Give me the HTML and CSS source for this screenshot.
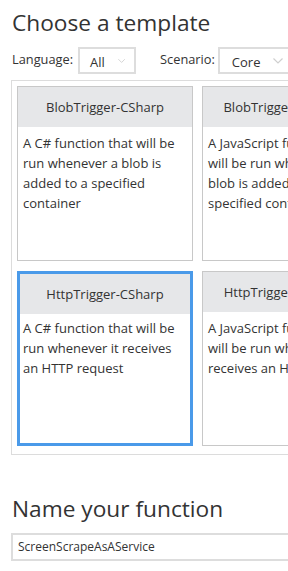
FILE: index.html
```html
<!DOCTYPE html>
<html lang="en">
<head>
    <meta charset="UTF-8">
    <meta name="viewport" content="width=device-width, initial-scale=1.0">
    <title>Choose a template</title>
    <link rel="stylesheet" href="styles.css">
</head>
<body>
<div class="page">
    <h1>Choose a template</h1>

    <div class="filters">
        <label class="filter-label">Language:</label>
        <div class="select select-lang">
            <span>All</span>
            <svg class="chevron" width="10" height="6" viewBox="0 0 10 6"><path d="M0.5 0.5 L5 5 L9.5 0.5" fill="none" stroke="#cfcfcf" stroke-width="1.2"/></svg>
        </div>
        <label class="filter-label filter-gap">Scenario:</label>
        <div class="select select-scenario">
            <span>Core</span>
            <svg class="chevron" width="10" height="6" viewBox="0 0 10 6"><path d="M0.5 0.5 L5 5 L9.5 0.5" fill="none" stroke="#cfcfcf" stroke-width="1.2"/></svg>
        </div>
    </div>

    <div class="templates">
        <div class="card">
            <div class="card-title">BlobTrigger-CSharp</div>
            <div class="card-desc">A C# function that will be run whenever a blob is added to a specified container</div>
        </div>
        <div class="card">
            <div class="card-title">BlobTrigger-JavaScript</div>
            <div class="card-desc">A JavaScript function that will be run whenever a blob is added to a specified container</div>
        </div>
        <div class="card selected">
            <div class="card-title">HttpTrigger-CSharp</div>
            <div class="card-desc">A C# function that will be run whenever it receives an HTTP request</div>
        </div>
        <div class="card">
            <div class="card-title">HttpTrigger-JavaScript</div>
            <div class="card-desc">A JavaScript function that will be run whenever it receives an HTTP request</div>
        </div>
    </div>

    <h1 class="name-heading">Name your function</h1>
    <div class="name-input">ScreenScrapeAsAService</div>
</div>
</body>
</html>
```

FILE: styles.css
```css
html, body {
    margin: 0;
    padding: 0;
    overflow: hidden;
}
body {
    font-family: "Open Sans", "Noto Sans", sans-serif;
    color: #333;
    background: #fff;
}
.page {
    padding: 6px 0 0 11px;
    width: 400px;
}
h1 {
    margin: 0;
    font-size: 22.7px;
    font-weight: 400;
    line-height: 34px;
    padding-left: 1px;
    color: #333;
}
.filters {
    display: flex;
    align-items: center;
    margin-top: 7px;
    height: 27px;
}
.filter-label {
    font-size: 12.8px;
    padding-left: 1px;
    margin-right: 5px;
    margin-top: -4px;
}
.filter-gap {
    margin-left: 23px;
    margin-right: 3px;
}
.select {
    box-sizing: border-box;
    height: 27px;
    border: 2px solid #ddd;
    display: flex;
    align-items: center;
    padding: 0 9px 0 10px;
    font-size: 13px;
}
.select span {
    padding-top: 2px;
}
.select-lang {
    width: 58px;
}
.select-scenario {
    width: 90px;
    padding-left: 12px;
}
.chevron {
    margin-top: 1px;
    margin-left: 13px;
}
.templates {
    margin-top: 6px;
    border: 1px solid #dcdcdc;
    padding: 5px 0 8px 5px;
    display: grid;
    grid-template-columns: 176px 176px;
    grid-auto-rows: 175px;
    column-gap: 9px;
    row-gap: 10px;
    width: 372px;
}
.card {
    box-sizing: border-box;
    border: 1px solid #c8c8c8;
    background: #fff;
    overflow: hidden;
}
.card-title {
    background: #e6e7e9;
    height: 40px;
    line-height: 40px;
    text-align: center;
    font-size: 13px;
}
.card-desc {
    font-size: 13px;
    line-height: 20px;
    padding: 6px 5px 0 5px;
}
.card.selected {
    border: 3px solid #4a9ae9;
}
.card.selected .card-desc {
    padding: 4px 3px 0 3px;
}
.name-heading {
    margin-top: 37px;
}
.name-input {
    box-sizing: border-box;
    margin-top: 7px;
    height: 28px;
    width: 300px;
    border: 2px solid #ddd;
    font-size: 12px;
    line-height: 24px;
    padding-left: 5px;
}
```
